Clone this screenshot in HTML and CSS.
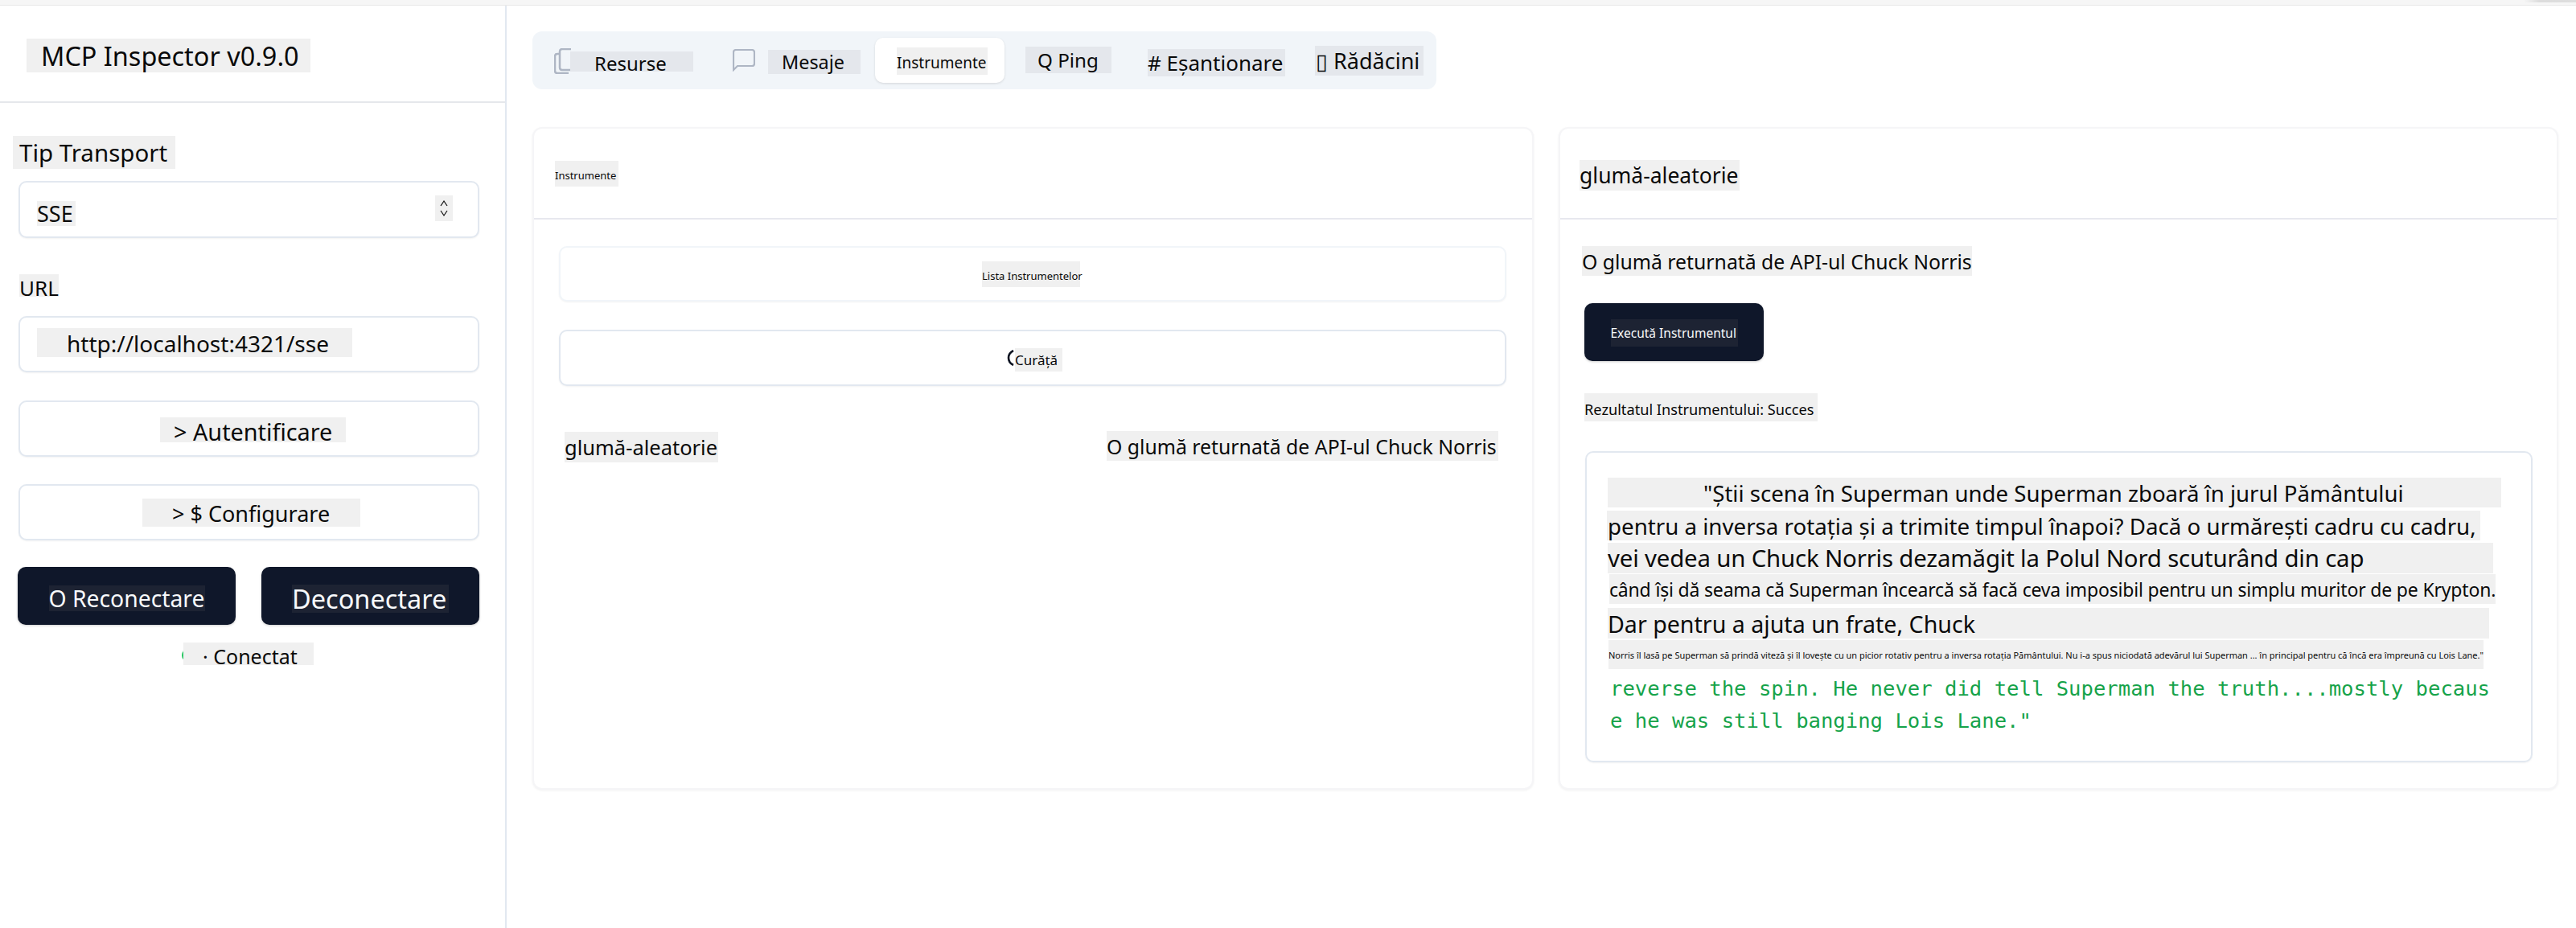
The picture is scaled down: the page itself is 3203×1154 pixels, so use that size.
FILE: index.html
```html
<!DOCTYPE html>
<html lang="ro">
<head>
<meta charset="utf-8">
<title>MCP Inspector</title>
<link rel="stylesheet" href="styles.css">
</head>
<body>
<div class="strip"><div class="strip-shade"></div></div>
<div class="app">
  <aside class="sidebar">
    <header class="side-head"><div class="patch title">MCP Inspector v0.9.0</div></header>
    <div class="patch lbl-transport">Tip Transport</div>
    <div class="box box-select">
      <span class="patch sse">SSE</span>
      <span class="patch chev"><svg width="12" height="24" viewBox="0 0 12 24" fill="none" stroke="#111" stroke-width="1.2"><path d="M2 9 6 3l4 6"/><path d="M2 15l4 6 4-6"/></svg></span>
    </div>
    <div class="patch lbl-url">URL</div>
    <div class="box box-url"><span class="patch url">http://localhost:4321/sse</span></div>
    <div class="box box-auth"><span class="patch auth">&gt; Autentificare</span></div>
    <div class="box box-conf"><span class="patch conf">&gt; $ Configurare</span></div>
    <div class="btn-row">
      <div class="btn"><span class="patch-dark recon">O Reconectare</span></div>
      <div class="btn"><span class="patch-dark decon">Deconectare</span></div>
    </div>
    <div class="status"><span class="dot"></span><span class="patch conn">· Conectat</span></div>
  </aside>
  <main class="main">
    <nav class="tabs">
      <div class="tab-res">
        <svg class="ic-files" width="22" height="32" viewBox="0 0 22 32" fill="none" stroke="#aeb6c4" stroke-width="2.5"><path d="M21 1H10Q7 1 7 4v20q0 3 3 3h11"/><path d="M7 7H4Q1 7 1 10v18q0 3 3 3h14"/></svg>
        <span class="patch-tab res"><span class="res-txt">Resurse</span></span>
      </div>
      <div class="tab-msg">
        <svg class="ic-msg" width="28" height="28" viewBox="0 0 28 28" fill="none" stroke="#aeb6c4" stroke-width="2.2"><path d="M1 26V4q0-3 3-3h20q3 0 3 3v14q0 3-3 3H6z"/></svg>
        <span class="patch-tab msg">Mesaje</span>
      </div>
      <div class="tab-active"><span class="patch act">Instrumente</span></div>
      <span class="patch-tab ping">Q Ping</span>
      <span class="patch-tab esan"># Eșantionare</span>
      <span class="patch-tab rad">▯ Rădăcini</span>
    </nav>
    <div class="cards">
      <section class="card">
        <div class="card-head card-head-tools"><div class="patch h-tools">Instrumente</div></div>
        <div class="box box-list"><span class="patch list">Lista Instrumentelor</span></div>
        <div class="box box-clear">
          <svg class="ic-clear" width="10" height="20" viewBox="0 0 10 20" fill="none" stroke="#0b1220" stroke-width="2.6"><path d="M8 1Q2 4 2 10t6 9"/></svg>
          <span class="patch clear">Curăță</span>
        </div>
        <div class="tool-row">
          <span class="patch tool-name">glumă-aleatorie</span>
          <span class="patch tool-desc">O glumă returnată de API-ul Chuck Norris</span>
        </div>
      </section>
      <section class="card">
        <div class="card-head card-head-joke"><div class="patch h-joke">glumă-aleatorie</div></div>
        <div class="patch joke-desc">O glumă returnată de API-ul Chuck Norris</div>
        <div class="btn btn-run"><span class="patch-dark run">Execută Instrumentul</span></div>
        <div class="patch result-lbl">Rezultatul Instrumentului: Succes</div>
        <div class="result">
          <div class="patch l1">"Știi scena în Superman unde Superman zboară în jurul Pământului</div>
          <div class="patch l2">pentru a inversa rotația și a trimite timpul înapoi? Dacă o urmărești cadru cu cadru,</div>
          <div class="patch l3">vei vedea un Chuck Norris dezamăgit la Polul Nord scuturând din cap</div>
          <div class="patch l4">când își dă seama că Superman încearcă să facă ceva imposibil pentru un simplu muritor de pe Krypton.</div>
          <div class="patch l5">Dar pentru a ajuta un frate, Chuck</div>
          <div class="patch l6">Norris îl lasă pe Superman să prindă viteză și îl lovește cu un picior rotativ pentru a inversa rotația Pământului. Nu i-a spus niciodată adevărul lui Superman ... în principal pentru că încă era împreună cu Lois Lane."</div>
          <div class="mono">reverse the spin. He never did tell Superman the truth....mostly because he was still banging Lois Lane."</div>
        </div>
      </section>
    </div>
  </main>
</div>
</body>
</html>
```
FILE: styles.css
```css
* { box-sizing: border-box; }
html, body { margin: 0; padding: 0; }
body { background: #fff; color: #0a0a0a; font-family: "Noto Sans", sans-serif; width: 3203px; height: 1154px; overflow: hidden; }

.strip { height: 7px; background: #f6f6f6; border-bottom: 1px solid #e8e8e8; display: flex; justify-content: flex-end; }
.strip-shade { width: 65px; height: 3px; background: linear-gradient(90deg, #f6f6f6, #dcdcdc 30%, #dedede); }
.app { display: flex; height: 1147px; }

.patch, .patch-dark, .patch-tab { display: flex; align-items: center; white-space: nowrap; background: #f0f0f0; }
.patch-dark { background: #1d2333; color: #f8fafc; }
.patch-tab { background: #e4e7ec; }
span.patch, span.patch-dark, span.patch-tab { flex: none; }

/* Sidebar */
.sidebar { width: 630px; flex: none; border-right: 2px solid #e2e8f0; }
.side-head { height: 121px; border-bottom: 2px solid #e5e7eb; padding: 41px 0 0 33px; }
.title { width: 353px; height: 42px; font-size: 32.4px; padding-left: 18px; }
.lbl-transport { width: 202px; height: 41px; margin: 41px 0 0 16px; font-size: 29.5px; padding-left: 8px; }
.lbl-url { width: 49px; height: 28px; margin: 45px 0 0 24px; font-size: 26px; padding-top: 5px; }

.box { display: flex; align-items: center; justify-content: flex-start; background: #fff; border: 2px solid #e2e8f0; border-radius: 10px; box-shadow: 0 1px 2px rgba(0,0,0,.05); }
.box-select { width: 573px; height: 71px; margin: 15px 0 0 23px; padding-left: 21px; position: relative; }
.sse { width: 48px; height: 31px; font-size: 27px; margin-top: 9px; }
.chev { position: absolute; left: 516px; top: 16px; width: 22px; height: 32px; justify-content: center; }
.box-url { width: 573px; height: 70px; margin: 24px 0 0 23px; padding-left: 21px; }
.url { width: 392px; height: 36px; font-size: 28px; padding: 2px 0 0 37px; margin-top: -4px; }
.box-auth { width: 573px; height: 70px; margin: 35px 0 0 23px; padding-left: 174px; }
.auth { width: 231px; height: 31px; font-size: 28.8px; padding: 4px 0 0 17px; margin-top: 2px; }
.box-conf { width: 573px; height: 70px; margin: 34px 0 0 23px; padding-left: 152px; }
.conf { width: 271px; height: 35px; font-size: 27px; padding: 1px 0 0 37px; margin-top: 1px; }

.btn-row { display: flex; gap: 32px; margin: 33px 0 0 22px; }
.btn { width: 271px; height: 72px; background: #0f172a; border-radius: 10px; box-shadow: 0 1px 3px rgba(0,0,0,.2); display: flex; align-items: center; justify-content: center; }
.recon { width: 194px; height: 32px; font-size: 28.3px; margin-top: 6px; }
.decon { width: 195px; height: 35px; font-size: 32.5px; margin-top: 6px; }

.status { display: flex; margin: 22px 0 0 226px; position: relative; }
.dot { width: 16px; height: 16px; border-radius: 50%; background: #22c55e; margin-top: 8px; }
.conn { width: 162px; height: 28px; font-size: 25px; padding: 5px 0 0 24px; margin-left: -14px; position: relative; }

/* Main */
.main { flex: 1; padding: 32px 22px 0 32px; min-width: 0; }
.tabs { display: flex; align-items: flex-start; width: 1124px; height: 72px; background: #f1f5f9; border-radius: 12px; padding-left: 8px; }
.tab-res { display: flex; margin-left: 19px; margin-top: 21px; position: relative; }
.ic-files { flex: none; }
.res { width: 153px; height: 25px; font-size: 24px; margin: 4px 0 0 -2px; padding: 3px 0 0 30px; position: relative; }
.tab-msg { display: flex; margin: 22px 0 0 49px; }
.msg { width: 115px; height: 30px; font-size: 23.4px; margin: 1px 0 0 16px; padding-left: 17px; }
.tab-active { width: 161px; height: 56px; margin: 8px 0 0 18px; background: #fff; border-radius: 10px; box-shadow: 0 1px 3px rgba(0,0,0,.12); padding: 12px 0 0 27px; }
.act { width: 113px; height: 34px; font-size: 19px; padding-top: 4px; }
.ping { width: 107px; height: 33px; font-size: 24.2px; margin: 19px 0 0 26px; padding-left: 15px; }
.esan { width: 171px; height: 34px; font-size: 26px; margin: 22px 0 0 45px; }
.rad { width: 135px; height: 37px; font-size: 27px; margin: 18px 0 0 37px; padding-left: 1px; }

.cards { display: grid; grid-template-columns: 1245px 1243px; gap: 31px; margin-top: 47px; }
.card { height: 824px; background: #fff; border: 2px solid #f5f5f7; border-radius: 12px; box-shadow: 0 1px 3px rgba(0,0,0,.06); }
.card-head { height: 113px; border-bottom: 2px solid #e7e8ee; }
.card-head-tools { padding: 40px 0 0 26px; }
.card-head-joke { padding: 39px 0 0 24px; }
.h-tools { width: 79px; height: 32px; font-size: 13px; padding-top: 4px; }
.h-joke { width: 199px; height: 38px; font-size: 26.5px; }
.box-list, .box-clear { width: 1178px; height: 69px; justify-content: flex-start; }
.box-list { margin: 33px 0 0 31px; padding-left: 524px; border-color: #f1f5f9; }
.list { width: 122px; height: 32px; font-size: 13px; margin-top: 1px; padding-top: 4px; }
.box-clear { height: 70px; margin: 35px 0 0 31px; padding-left: 555px; }
.ic-clear { flex: none; }
.clear { width: 59px; height: 29px; font-size: 17px; margin-top: 5px; }
.tool-row { display: flex; justify-content: space-between; margin: 57px 42px 0 38px; }
.tool-name { width: 191px; height: 38px; font-size: 25.5px; }
.tool-desc { width: 487px; height: 37px; font-size: 24.8px; margin-top: -1px; }

.joke-desc { width: 485px; height: 37px; font-size: 24.8px; margin: 33px 0 0 27px; }
.btn-run { width: 223px; margin: 34px 0 0 30px; }
.run { width: 158px; height: 34px; font-size: 15.5px; margin-top: 2px; }
.result-lbl { width: 290px; height: 35px; font-size: 18.2px; margin: 40px 0 0 30px; padding-top: 4px; }

.result { width: 1178px; height: 387px; margin: 37px 0 0 31px; border: 2px solid #e2e8f0; border-radius: 10px; box-shadow: 0 1px 2px rgba(0,0,0,.05); padding: 31px 0 0 26px; }
.l1 { width: 1111px; height: 37px; font-size: 27.6px; padding-left: 119px; }
.l2 { width: 1086px; height: 37px; font-size: 27.7px; margin-top: 4px; margin-left: -1px; padding-left: 1px; }
.l3 { width: 1101px; height: 38px; font-size: 29.4px; letter-spacing: -0.18px; margin-top: 3px; }
.l4 { width: 1102px; height: 37px; font-size: 23px; letter-spacing: -0.18px; margin: 1px 0 0 2px; }
.l5 { width: 1096px; height: 38px; font-size: 28.6px; margin-top: 5px; }
.l6 { width: 1088px; height: 36px; font-size: 11px; letter-spacing: -0.02px; margin: 2px 0 0 1px; }
.mono { width: 1100px; margin: 4px 0 0 3px; font-family: "DejaVu Sans Mono", monospace; font-size: 25.6px; line-height: 40px; color: #16a34a; word-break: break-all; }
```
